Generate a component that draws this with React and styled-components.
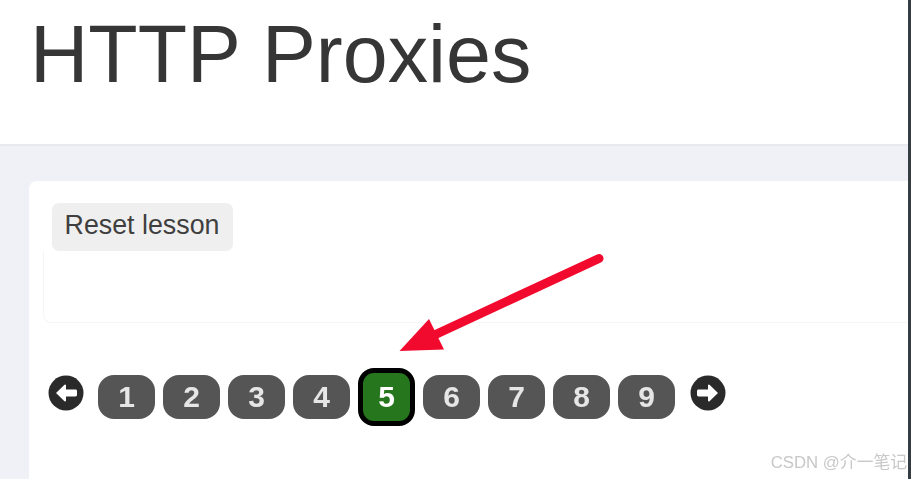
import React from 'react'
import styled, { createGlobalStyle } from 'styled-components'

const lessonPages = [1, 2, 3, 4, 5, 6, 7, 8, 9]
const activePage = 5

const GlobalStyle = createGlobalStyle`
  html,
  body {
    margin: 0;
    padding: 0;
    height: 100%;
    overflow: hidden;
    background: #fff;
    font-family: 'Liberation Sans', Arial, sans-serif;
  }
`

const Page = styled.div`
  position: relative;
  display: flex;
  width: 911px;
  height: 479px;
  overflow: hidden;
  filter: blur(0.35px);
`

const Main = styled.div`
  display: flex;
  flex-direction: column;
  flex: 1;
  min-width: 0;
`

const ScrollEdge = styled.div`
  width: 3px;
  background: #353c42;
`

const Header = styled.header`
  height: 146px;
  box-sizing: border-box;
  padding: 8px 0 0 30px;
  background: #fff;
  border-bottom: 2px solid #e9eaee;
`

const Title = styled.h1`
  margin: 0;
  font-size: 80.8px;
  line-height: 92px;
  font-weight: 400;
  color: #363636;
`

const Content = styled.main`
  flex: 1;
  display: flex;
  padding: 35px 0 0 29px;
  background: #eff1f6;
`

const Card = styled.section`
  flex: 1;
  box-sizing: border-box;
  padding: 22px 0 0 14px;
  background: #fff;
  border-radius: 8px 0 0 0;
`

const LessonPanel = styled.div`
  height: 72px;
  box-sizing: border-box;
  border: 1px solid #f5f5f6;
  border-top: 0;
  border-right: 0;
  border-radius: 0 0 0 8px;
`

const ResetButton = styled.button`
  display: block;
  width: 181px;
  height: 48px;
  margin: 0 0 0 9px;
  padding: 0 1px 3px 0;
  border: 0;
  border-radius: 7px;
  background: #efefef;
  color: #3f3f3f;
  font-family: inherit;
  font-size: 26.8px;
  text-align: center;
`

const Pagination = styled.nav`
  display: flex;
  align-items: center;
  height: 58px;
  margin-top: 45px;
  padding-left: 5px;
`

const ArrowLink = styled.a`
  display: flex;
  margin: ${({ $next }) => ($next ? '-8px 0 0 15px' : '-8px 14px 0 0')};

  svg {
    display: block;
    width: 36px;
    height: 36px;
  }
`

const PageList = styled.div`
  display: flex;
  align-items: center;
  gap: 8px;
`

const PageButton = styled.a`
  display: flex;
  align-items: center;
  justify-content: center;
  box-sizing: border-box;
  width: 57px;
  height: ${({ $active }) => ($active ? '58px' : '44px')};
  border-radius: 16px;
  border: ${({ $active }) => ($active ? '5px solid #000' : '0')};
  background: ${({ $active }) => ($active ? '#26761d' : '#555')};
  color: ${({ $active }) => ($active ? '#fff' : '#e6e6e6')};
  font-size: 30px;
  font-weight: 700;
`

const CalloutArrow = styled.svg`
  position: absolute;
  left: 0;
  top: 0;
  width: 911px;
  height: 479px;
  pointer-events: none;
`

const Watermark = styled.span`
  position: absolute;
  right: 4px;
  bottom: 6px;
  font-size: 16.8px;
  line-height: 20px;
  color: #c8c8c8;
  font-family: 'Liberation Sans', 'Noto Sans CJK SC', sans-serif;
`

const CircleArrow = ({ flip }) => (
  <svg viewBox="0 0 36 36" style={flip ? { transform: 'scaleX(-1)' } : undefined}>
    <circle cx="18" cy="18" r="17.5" fill="#2a2a2a" />
    <path
      d="M8 18 L16.5 9.8 Q17.5 9 18 10.2 L18 14.6 L27.5 14.6 Q29 14.6 29 16 L29 20 Q29 21.4 27.5 21.4 L18 21.4 L18 25.8 Q17.5 27 16.5 26.2 Z"
      fill="#fff"
    />
  </svg>
)

export default function App() {
  return (
    <Page>
      <GlobalStyle />
      <Main>
        <Header>
          <Title>HTTP Proxies</Title>
        </Header>
        <Content>
          <Card>
            <ResetButton>Reset lesson</ResetButton>
            <LessonPanel />
            <Pagination>
              <ArrowLink>
                <CircleArrow />
              </ArrowLink>
              <PageList>
                {lessonPages.map((page) => (
                  <PageButton key={page} $active={page === activePage}>
                    {page}
                  </PageButton>
                ))}
              </PageList>
              <ArrowLink $next>
                <CircleArrow flip />
              </ArrowLink>
            </Pagination>
          </Card>
        </Content>
      </Main>
      <ScrollEdge />
      <CalloutArrow viewBox="0 0 911 479">
        <path d="M599 258.5 L428 338" stroke="#f20a2e" strokeWidth="9" strokeLinecap="round" fill="none" />
        <path d="M399.5 351 L429 319 L444 349.5 Z" fill="#f20a2e" />
      </CalloutArrow>
      <Watermark>CSDN @介一笔记</Watermark>
    </Page>
  )
}
